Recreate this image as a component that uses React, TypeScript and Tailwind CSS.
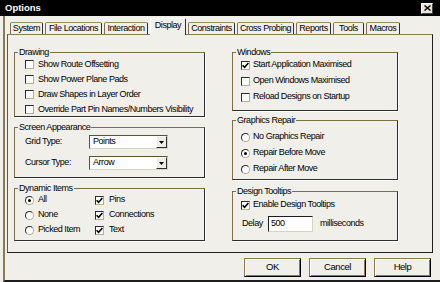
import React from 'react';

const tabs = [
  { label: 'System', w: 'w-[33px]' },
  { label: 'File Locations', w: 'w-[57px]' },
  { label: 'Interaction', w: 'w-[44px]' },
  { label: 'Display', w: 'w-[36px]', active: true },
  { label: 'Constraints', w: 'w-[47px]' },
  { label: 'Cross Probing', w: 'w-[57px]' },
  { label: 'Reports', w: 'w-[35px]' },
  { label: 'Tools', w: 'w-[31px]' },
  { label: 'Macros', w: 'w-[34px]' },
];

function CheckBox({ checked = false }: { checked?: boolean }) {
  return (
    <span className="w-[9px] h-[9px] shrink-0 bg-white border border-t-[#2b2b2b] border-l-[#2b2b2b] border-r-[#b8ad8c] border-b-[#b8ad8c] flex items-center justify-center">
      {checked && (
        <svg width="7" height="7" viewBox="0 0 7 7">
          <path d="M0.6 3.2 L2.6 5.3 L6.4 1" stroke="#000" strokeWidth="1.6" fill="none" />
        </svg>
      )}
    </span>
  );
}

function Radio({ checked = false }: { checked?: boolean }) {
  return (
    <span className="w-[9px] h-[9px] shrink-0 rounded-full bg-white border border-t-[#2b2b2b] border-l-[#2b2b2b] border-r-[#b8ad8c] border-b-[#b8ad8c] flex items-center justify-center">
      {checked && <span className="w-[3px] h-[3px] rounded-full bg-black" />}
    </span>
  );
}

function GroupBox({
  title,
  className = '',
  children,
}: {
  title: string;
  className?: string;
  children: React.ReactNode;
}) {
  return (
    <div
      className={`relative border border-t-[#7d6e48] border-l-[#7d6e48] border-r-[#2e2e2e] border-b-[#2e2e2e] shadow-[1px_1px_0_#fff] ${className}`}
    >
      <span className="absolute -top-[6px] left-[3px] px-[1px] leading-[10px] bg-[#f0efe9]">{title}</span>
      {children}
    </div>
  );
}

function Combo({ value }: { value: string }) {
  return (
    <div className="w-[79px] h-[14px] bg-white border border-t-[#5e5236] border-l-[#5e5236] border-r-[#d8d2c0] border-b-[#d8d2c0] flex items-center">
      <span className="pl-[3px]">{value}</span>
      <span className="ml-auto w-[11px] h-[12px] bg-[#eeede6] border border-t-white border-l-white border-r-[#2e2e2e] border-b-[#2e2e2e] flex items-center justify-center">
        <svg width="5" height="3" viewBox="0 0 5 3">
          <path d="M0 0 H5 L2.5 3 Z" fill="#000" />
        </svg>
      </span>
    </div>
  );
}

function Button({ label }: { label: string }) {
  return (
    <button
      type="button"
      className="w-[57px] h-[19px] text-[9.5px] bg-[#f0efe9] border border-t-[#8a7a52] border-l-[#8a7a52] border-r-black border-b-black shadow-[inset_1px_1px_0_#fff,inset_-1px_-1px_0_#8a7a52] flex items-center justify-center"
    >
      {label}
    </button>
  );
}

export default function App() {
  return (
    <div className="w-[440px] h-[282px] overflow-hidden bg-[#f0efe9] flex flex-col text-black text-[9px] tracking-[-0.45px] font-['Liberation_Sans',Arial,sans-serif]">
      {/* title bar */}
      <div className="h-[16px] shrink-0 bg-black flex items-center justify-between pl-[5px] pr-[7px]">
        <span className="text-white font-bold text-[9.5px] tracking-normal">Options</span>
        <span className="w-[12px] h-[11px] bg-[#e8e6dc] border border-t-white border-l-white border-r-[#444] border-b-[#444] flex items-center justify-center">
          <svg width="7" height="6" viewBox="0 0 7 6">
            <path d="M0.5 0.5 L6.5 5.5 M6.5 0.5 L0.5 5.5" stroke="#000" strokeWidth="1.4" />
          </svg>
        </span>
      </div>

      <div className="flex-1 flex flex-col ml-[3px] pl-[2px] border-l-2 border-l-[#8a7a52] border-b-2 border-b-[#1e1e1e]">
        {/* tabs */}
        <div className="h-[18px] shrink-0 flex items-end gap-[2px] pl-[3px]">
          {tabs.map((t) =>
            t.active ? (
              <div
                key={t.label}
                className={`${t.w} h-[17px] -mb-[1px] relative z-10 bg-[#f0efe9] border border-b-0 border-t-white border-l-white border-r-[#2e2e2e] rounded-t-[2px] flex items-center justify-center pb-[3px]`}
              >
                {t.label}
              </div>
            ) : (
              <div
                key={t.label}
                className={`${t.w} h-[12px] border border-b-0 border-t-[#9a8c66] border-l-[#7d6e48] border-r-[#2e2e2e] rounded-t-[2px] flex items-center justify-center whitespace-nowrap`}
              >
                {t.label}
              </div>
            )
          )}
        </div>

        {/* tab panel */}
        <div className="w-[426px] h-[219px] shrink-0 border border-t-[#8a7a52] border-l-[#5a5a5a] border-r-[#1e1e1e] border-b-[#1e1e1e] flex gap-[27px] pl-[6px] pt-[17px]">
          {/* left column */}
          <div className="w-[191px] flex flex-col">
            <GroupBox title="Drawing" className="h-[65px]">
              <div className="flex flex-col gap-[4px] pt-[6px] pl-[10px]">
                {[
                  'Show Route Offsetting',
                  'Show Power Plane Pads',
                  'Draw Shapes in Layer Order',
                  'Override Part Pin Names/Numbers Visibility',
                ].map((l) => (
                  <div key={l} className="h-[11px] flex items-center gap-[4px] whitespace-nowrap">
                    <CheckBox />
                    <span>{l}</span>
                  </div>
                ))}
              </div>
            </GroupBox>

            <GroupBox title="Screen Appearance" className="h-[51px] mt-[10px]">
              <div className="flex flex-col gap-[7px] pt-[7px] pl-[10px]">
                <div className="flex items-center">
                  <span className="w-[64px]">Grid Type:</span>
                  <Combo value="Points" />
                </div>
                <div className="flex items-center">
                  <span className="w-[64px]">Cursor Type:</span>
                  <Combo value="Arrow" />
                </div>
              </div>
            </GroupBox>

            <GroupBox title="Dynamic Items" className="h-[53px] mt-[10px]">
              <div className="flex pt-[5px] pl-[10px]">
                <div className="w-[70px] flex flex-col gap-[3px]">
                  {[
                    ['All', true],
                    ['None', false],
                    ['Picked Item', false],
                  ].map(([l, c]) => (
                    <div key={l as string} className="h-[12px] flex items-center gap-[4px]">
                      <Radio checked={c as boolean} />
                      <span>{l as string}</span>
                    </div>
                  ))}
                </div>
                <div className="flex flex-col gap-[3px]">
                  {['Pins', 'Connections', 'Text'].map((l) => (
                    <div key={l} className="h-[12px] flex items-center gap-[5px]">
                      <CheckBox checked />
                      <span>{l}</span>
                    </div>
                  ))}
                </div>
              </div>
            </GroupBox>
          </div>

          {/* right column */}
          <div className="w-[166px] flex flex-col">
            <GroupBox title="Windows" className="h-[59px]">
              <div className="flex flex-col gap-[4px] pt-[6px] pl-[8px]">
                {[
                  ['Start Application Maximised', true],
                  ['Open Windows Maximised', false],
                  ['Reload Designs on Startup', false],
                ].map(([l, c]) => (
                  <div key={l as string} className="h-[12px] flex items-center gap-[3px] whitespace-nowrap">
                    <CheckBox checked={c as boolean} />
                    <span>{l as string}</span>
                  </div>
                ))}
              </div>
            </GroupBox>

            <GroupBox title="Graphics Repair" className="h-[60px] mt-[9px]">
              <div className="flex flex-col gap-[4px] pt-[10px] pl-[8px]">
                {[
                  ['No Graphics Repair', false],
                  ['Repair Before Move', true],
                  ['Repair After Move', false],
                ].map(([l, c]) => (
                  <div key={l as string} className="h-[12px] flex items-center gap-[3px]">
                    <Radio checked={c as boolean} />
                    <span>{l as string}</span>
                  </div>
                ))}
              </div>
            </GroupBox>

            <GroupBox title="Design Tooltips" className="h-[50px] mt-[11px]">
              <div className="flex flex-col gap-[5px] pt-[7px] pl-[8px]">
                <div className="h-[12px] flex items-center gap-[3px]">
                  <CheckBox checked />
                  <span>Enable Design Tooltips</span>
                </div>
                <div className="h-[16px] flex items-center">
                  <span className="w-[27px] pl-[1px]">Delay</span>
                  <div className="w-[45px] h-[16px] bg-white border border-t-[#1e1e1e] border-l-[#1e1e1e] border-r-[#d8d2c0] border-b-[#d8d2c0] flex items-center pl-[2px]">
                    500
                  </div>
                  <span className="ml-[7px]">milliseconds</span>
                </div>
              </div>
            </GroupBox>
          </div>
        </div>

        {/* buttons */}
        <div className="flex justify-end gap-[8px] pr-[9px] mt-[5px]">
          <Button label="OK" />
          <Button label="Cancel" />
          <Button label="Help" />
        </div>
      </div>
    </div>
  );
}
